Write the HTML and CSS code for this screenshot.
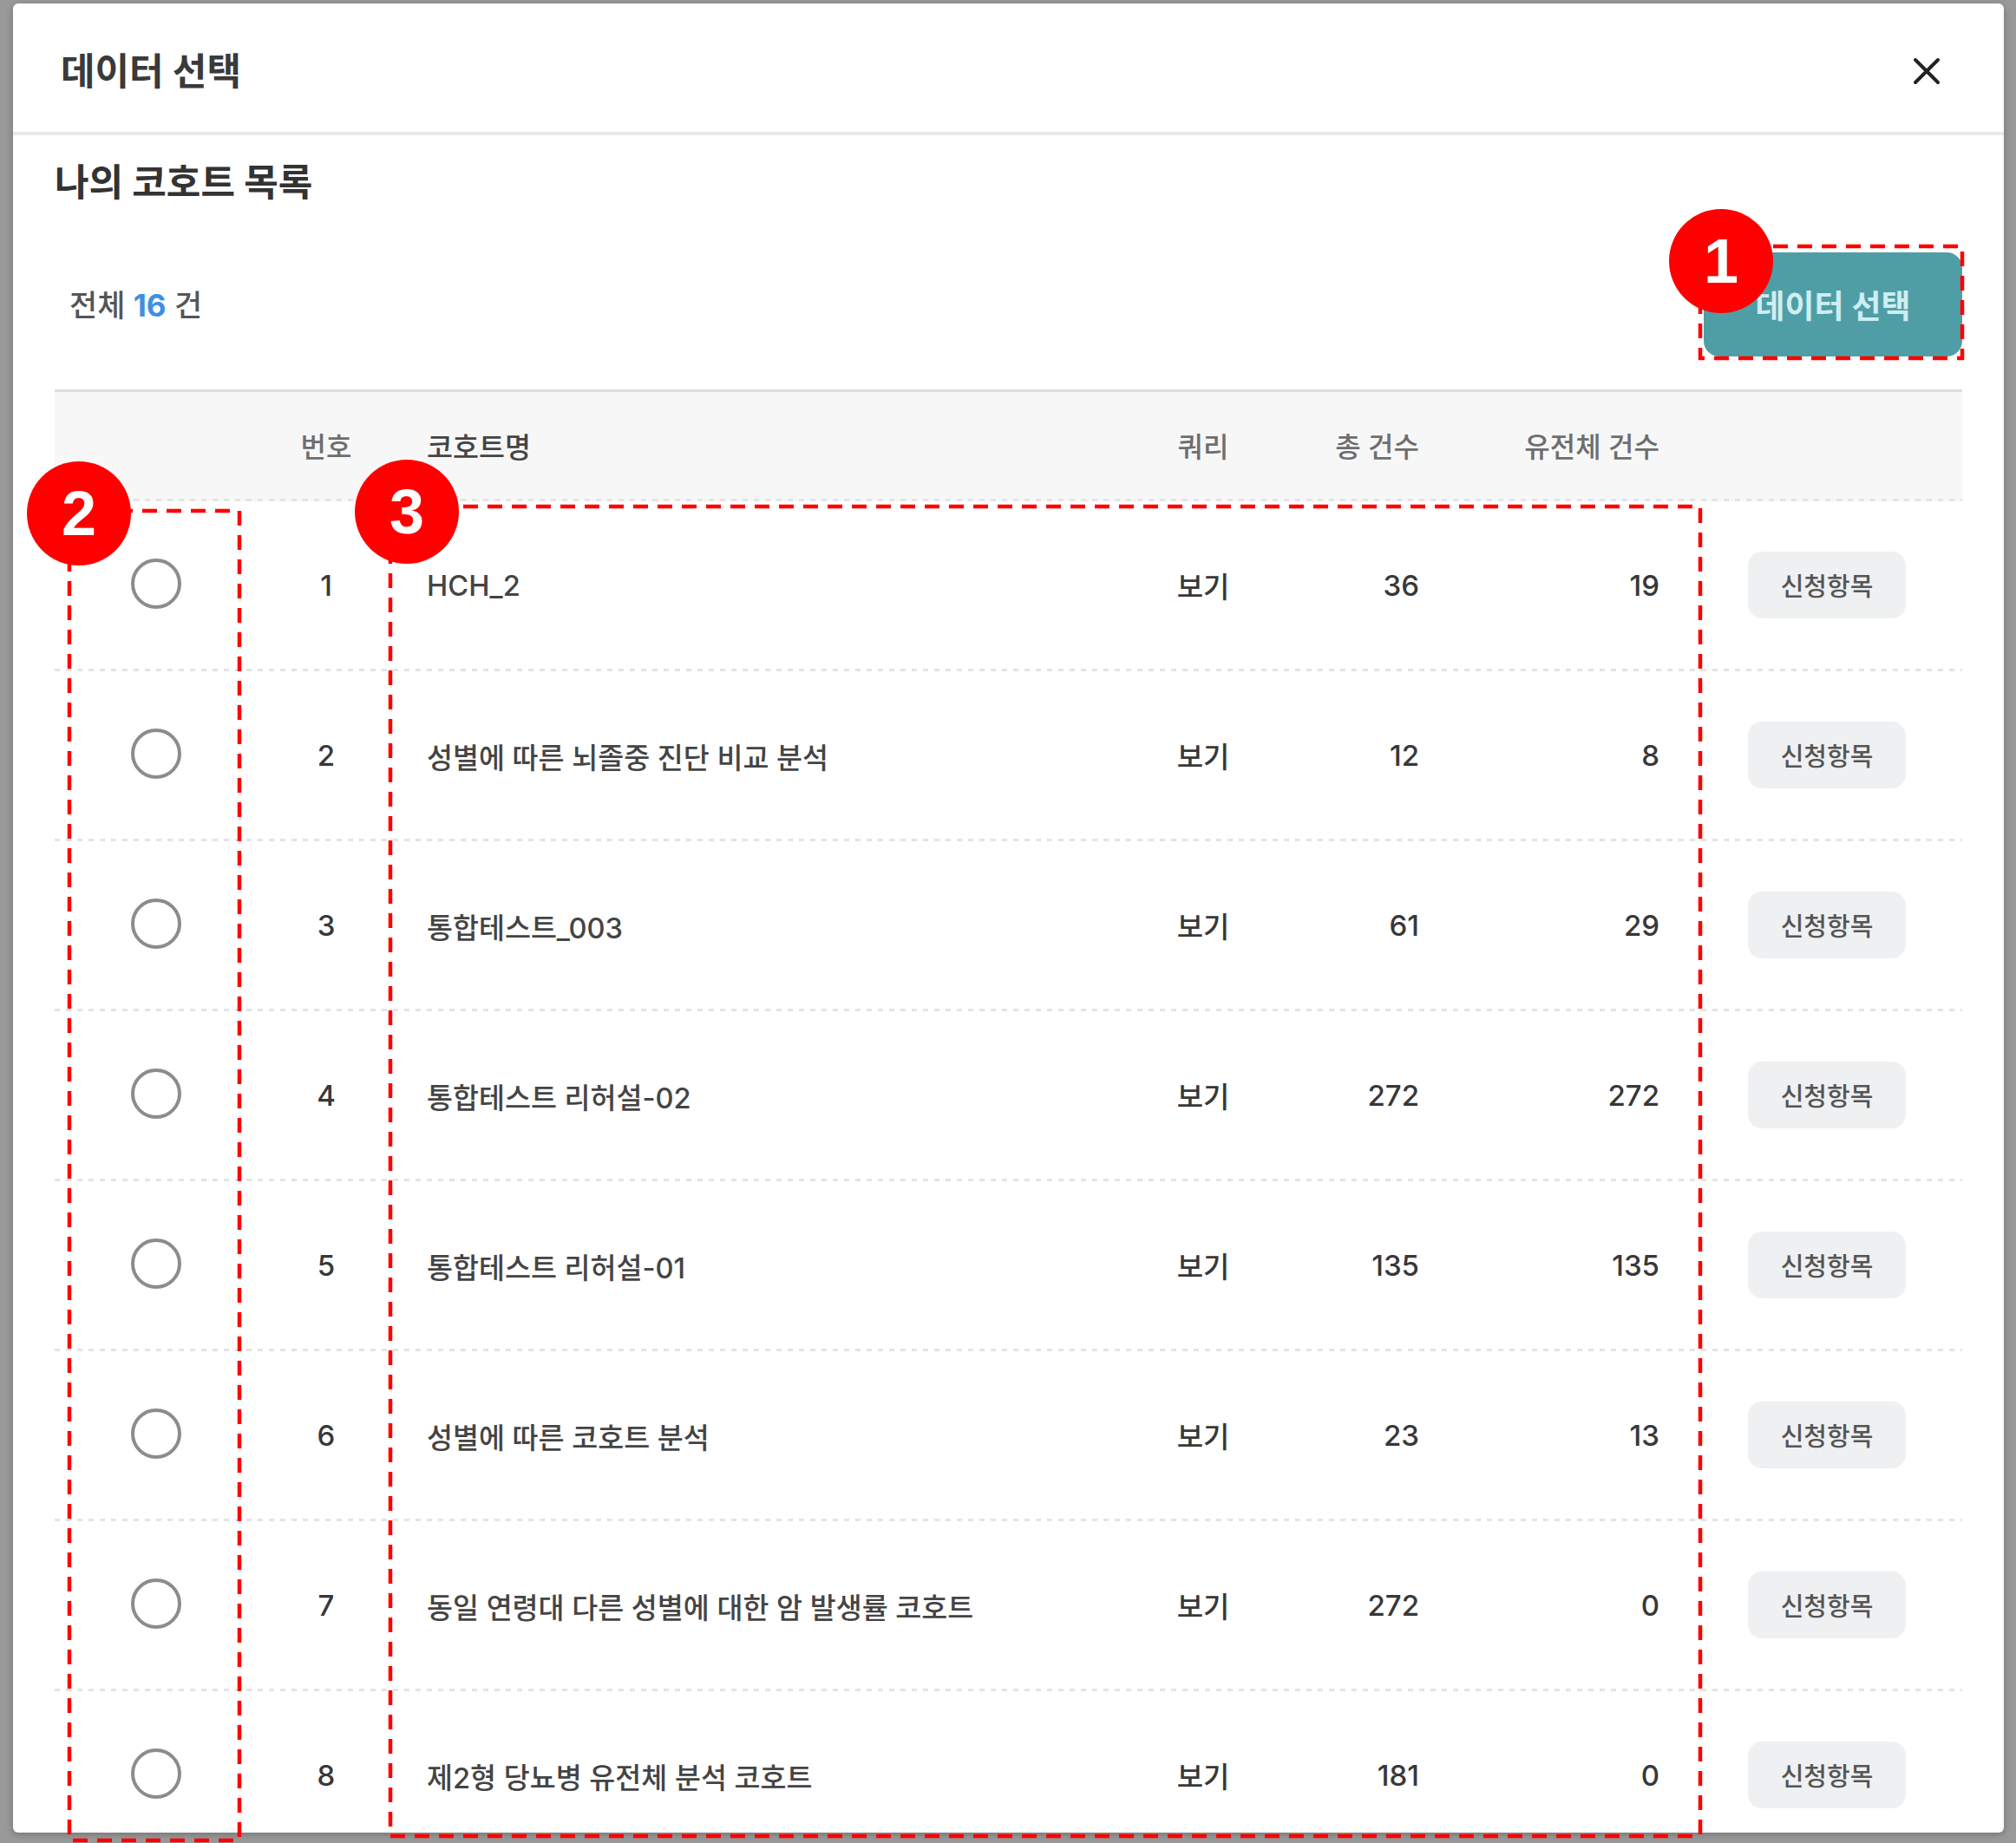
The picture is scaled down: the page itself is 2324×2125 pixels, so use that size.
FILE: index.html
```html
<!DOCTYPE html>
<html lang="ko">
<head>
<meta charset="utf-8">
<title>데이터 선택</title>
<link rel="stylesheet" href="styles.css">
</head>
<body>
<div class="modal">
  <header class="modal-header">
    <h1 class="modal-title">데이터 선택</h1>
    <button class="close-btn" aria-label="닫기">
      <svg width="34" height="34" viewBox="0 0 34 34"><path d="M4 4 L30 30 M30 4 L4 30" fill="none" stroke="#222" stroke-width="4" stroke-linecap="round"/></svg>
    </button>
  </header>
  <div class="modal-body">
    <h2 class="section-title">나의 코호트 목록</h2>
    <div class="toolbar">
      <p class="count">전체 <strong>16</strong> 건</p>
      <button class="primary-btn">데이터 선택</button>
    </div>
    <div class="table">
      <div class="row thead">
        <div class="cell"></div>
        <div class="cell center">번호</div>
        <div class="cell name">코호트명</div>
        <div class="cell center">쿼리</div>
        <div class="cell right">총 건수</div>
        <div class="cell right">유전체 건수</div>
        <div class="cell"></div>
      </div>
      <div class="row"><div class="cell center"><span class="radio"></span></div><div class="cell center">1</div><div class="cell name">HCH_2</div><div class="cell center">보기</div><div class="cell right">36</div><div class="cell right">19</div><div class="cell action"><button class="sub-btn">신청항목</button></div></div>
      <div class="row"><div class="cell center"><span class="radio"></span></div><div class="cell center">2</div><div class="cell name">성별에 따른 뇌졸중 진단 비교 분석</div><div class="cell center">보기</div><div class="cell right">12</div><div class="cell right">8</div><div class="cell action"><button class="sub-btn">신청항목</button></div></div>
      <div class="row"><div class="cell center"><span class="radio"></span></div><div class="cell center">3</div><div class="cell name">통합테스트_003</div><div class="cell center">보기</div><div class="cell right">61</div><div class="cell right">29</div><div class="cell action"><button class="sub-btn">신청항목</button></div></div>
      <div class="row"><div class="cell center"><span class="radio"></span></div><div class="cell center">4</div><div class="cell name">통합테스트 리허설-02</div><div class="cell center">보기</div><div class="cell right">272</div><div class="cell right">272</div><div class="cell action"><button class="sub-btn">신청항목</button></div></div>
      <div class="row"><div class="cell center"><span class="radio"></span></div><div class="cell center">5</div><div class="cell name">통합테스트 리허설-01</div><div class="cell center">보기</div><div class="cell right">135</div><div class="cell right">135</div><div class="cell action"><button class="sub-btn">신청항목</button></div></div>
      <div class="row"><div class="cell center"><span class="radio"></span></div><div class="cell center">6</div><div class="cell name">성별에 따른 코호트 분석</div><div class="cell center">보기</div><div class="cell right">23</div><div class="cell right">13</div><div class="cell action"><button class="sub-btn">신청항목</button></div></div>
      <div class="row"><div class="cell center"><span class="radio"></span></div><div class="cell center">7</div><div class="cell name">동일 연령대 다른 성별에 대한 암 발생률 코호트</div><div class="cell center">보기</div><div class="cell right">272</div><div class="cell right">0</div><div class="cell action"><button class="sub-btn">신청항목</button></div></div>
      <div class="row"><div class="cell center"><span class="radio"></span></div><div class="cell center">8</div><div class="cell name">제2형 당뇨병 유전체 분석 코호트</div><div class="cell center">보기</div><div class="cell right">181</div><div class="cell right">0</div><div class="cell action"><button class="sub-btn">신청항목</button></div></div>
    </div>
  </div>
</div>

<svg class="annotations" width="2324" height="2125" viewBox="0 0 2324 2125">
  <g fill="none" stroke="#ff0000" stroke-width="4.5" stroke-dasharray="17 11">
    <rect x="1960" y="284" width="302" height="129"/>
    <rect x="80" y="589" width="196" height="1533"/>
    <rect x="450" y="584" width="1510" height="1533"/>
  </g>
  <g fill="#ff0000">
    <circle cx="1984" cy="301" r="60"/>
    <circle cx="91" cy="592" r="60"/>
    <circle cx="469" cy="590" r="60"/>
  </g>
  <g class="badge-num" fill="#fff" text-anchor="middle">
    <text x="1984" y="326">1</text>
    <text x="91" y="617">2</text>
    <text x="469" y="615">3</text>
  </g>
</svg>
</body>
</html>
```

FILE: styles.css
```css
* { box-sizing: border-box; }

html, body {
  margin: 0;
  padding: 0;
}

body {
  position: relative;
  width: 2324px;
  height: 2125px;
  overflow: hidden;
  background: #999999;
  font-family: Inter, "Noto Sans CJK KR", "Noto Sans", sans-serif;
  color: #333;
}

.modal {
  margin: 4px 14px 0 15px;
  height: 2109px;
  background: #ffffff;
  border-radius: 6px;
  overflow: hidden;
  box-shadow: 0 2px 8px rgba(0, 0, 0, 0.25);
}

.modal-header {
  height: 152px;
  display: flex;
  align-items: center;
  justify-content: space-between;
  padding: 8px 72px 0 55px;
  border-bottom: 4px solid #e9e9e9;
}

.modal-title {
  margin: 0;
  font-size: 43px;
  line-height: 1;
  font-weight: 700;
  color: #3a3a3a;
}

.close-btn {
  border: 0;
  background: none;
  padding: 0;
  width: 34px;
  height: 34px;
  display: flex;
}

.modal-body {
  padding: 0 48px;
}

.section-title {
  margin: 26px 0 0;
  font-size: 43px;
  line-height: 56px;
  font-weight: 700;
  color: #333;
}

.toolbar {
  margin-top: 53px;
  height: 120px;
  display: flex;
  align-items: center;
  justify-content: space-between;
}

.count {
  margin: 0 0 4px;
  padding-left: 17px;
  font-size: 35px;
  font-weight: 500;
  color: #555;
}

.count strong {
  color: #3d8fe6;
  font-weight: 700;
}

.primary-btn {
  width: 298px;
  height: 120px;
  border: 0;
  border-radius: 18px;
  background: #4f9ea6;
  color: #cdeef2;
  font-family: inherit;
  font-size: 37px;
  font-weight: 700;
  padding: 0;
}

.table {
  margin-top: 38px;
  border-top: 3px solid #dedede;
}

.row {
  display: grid;
  grid-template-columns: 234px 158px 845px 174px 162px 277px 1fr;
  align-items: center;
  height: 196px;
  font-size: 33px;
  font-weight: 500;
  color: #383838;
  padding-bottom: 2px;
  background-image: repeating-linear-gradient(to right, #e4e4e4 0 6px, transparent 6px 13px);
  background-size: 100% 3px;
  background-position: left bottom;
  background-repeat: no-repeat;
}

.row.thead {
  height: 126px;
  background-color: #f7f7f8;
  font-size: 32px;
  color: #6e6e6e;
  padding-bottom: 4px;
}

.cell.center { text-align: center; display: flex; justify-content: center; }
.cell.right { text-align: right; }
.cell.name { padding-left: 37px; color: #444; white-space: nowrap; font-size: 32.6px; }
.cell.action { padding-left: 102px; display: flex; }

.radio {
  display: block;
  width: 58px;
  height: 58px;
  border: 4px solid #8c8c8c;
  border-radius: 50%;
  margin-top: -4px;
}

.sub-btn {
  width: 182px;
  height: 77px;
  border: 0;
  border-radius: 16px;
  background: #eff0f2;
  color: #555;
  font-family: inherit;
  font-size: 29px;
  font-weight: 500;
  margin-top: -2px;
  padding: 0;
}

.annotations {
  position: absolute;
  top: 0;
  left: 0;
  pointer-events: none;
}

.badge-num {
  font-family: "Liberation Sans", Arial, sans-serif;
  font-weight: 700;
  font-size: 72px;
}
```
